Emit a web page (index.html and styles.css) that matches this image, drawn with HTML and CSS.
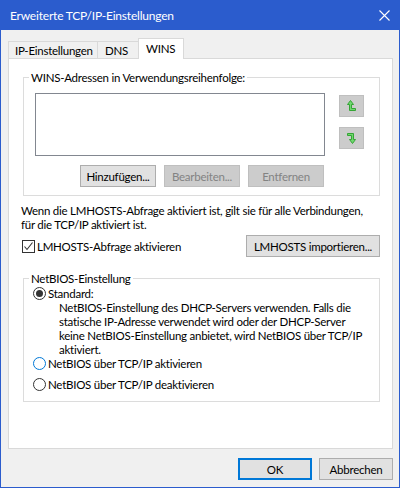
FILE: index.html
```html
<!DOCTYPE html>
<html lang="de">

<head>
    <meta charset="UTF-8">
    <title>Erweiterte TCP/IP-Einstellungen</title>
    <link rel="stylesheet" href="styles.css">
</head>

<body>
    <div class="window">
        <div class="titlebar">
            <span class="title">Erweiterte TCP/IP-Einstellungen</span>
            <svg class="close" width="11" height="11" viewBox="0 0 11 11">
                <path d="M0.5 0.5 L10.5 10.5 M10.5 0.5 L0.5 10.5" stroke="#fff" stroke-width="1.1" fill="none" />
            </svg>
        </div>

        <div class="content">
            <div class="tabs">
                <div class="tab tab-ip">IP-Einstellungen</div>
                <div class="tab tab-dns">DNS</div>
                <div class="tab tab-wins active">WINS</div>
            </div>

            <div class="panel">
                <!-- WINS addresses -->
                <fieldset class="group wins">
                    <legend>WINS-Adressen in Verwendungsreihenfolge:</legend>
                    <div class="wins-grid">
                        <div class="listbox"></div>
                        <div class="arrows">
                            <div class="arrow">
                                <svg width="9" height="12" viewBox="0 0 9 12">
                                    <path d="M3.5 0.5 L6.5 4.5 L4.5 4.5 L4.5 8.5 L8.5 8.5 L8.5 10.5 L2.5 10.5 L2.5 4.5 L0.5 4.5 Z" fill="#6fd86f" stroke="#35a535" stroke-width="1" />
                                </svg>
                            </div>
                            <div class="arrow">
                                <svg width="9" height="12" viewBox="0 0 9 12">
                                    <path d="M5.5 11.5 L2.5 7.5 L4.5 7.5 L4.5 3.5 L0.5 3.5 L0.5 1.5 L6.5 1.5 L6.5 7.5 L8.5 7.5 Z" fill="#6fd86f" stroke="#35a535" stroke-width="1" />
                                </svg>
                            </div>
                        </div>
                        <div class="list-buttons">
                            <button class="btn">Hinzufügen...</button>
                            <button class="btn" disabled>Bearbeiten...</button>
                            <button class="btn" disabled>Entfernen</button>
                        </div>
                    </div>
                </fieldset>

                <p class="note">Wenn die LMHOSTS-Abfrage aktiviert ist, gilt sie für alle Verbindungen,<br>für die TCP/IP aktiviert ist.</p>

                <div class="lmhosts-row">
                    <label class="check">
                        <span class="box">
                            <svg width="11" height="11" viewBox="0 0 11 11">
                                <path d="M1.5 5.5 L4 8.5 L9.5 1.5" stroke="#333" stroke-width="1.1" fill="none" />
                            </svg>
                        </span>
                        LMHOSTS-Abfrage aktivieren
                    </label>
                    <button class="btn import">LMHOSTS importieren...</button>
                </div>

                <!-- NetBIOS -->
                <fieldset class="group netbios">
                    <legend>NetBIOS-Einstellung</legend>
                    <div class="radio"><span class="dot checked"></span>Standard:</div>
                    <p class="desc">NetBIOS-Einstellung des DHCP-Servers verwenden. Falls die<br>statische IP-Adresse verwendet wird oder der DHCP-Server<br>keine NetBIOS-Einstellung anbietet, wird NetBIOS über TCP/IP<br>aktiviert.</p>
                    <div class="radio"><span class="dot hover"></span>NetBIOS über TCP/IP aktivieren</div>
                    <div class="radio last"><span class="dot"></span>NetBIOS über TCP/IP deaktivieren</div>
                </fieldset>
            </div>

            <div class="footer">
                <button class="btn default">OK</button>
                <button class="btn">Abbrechen</button>
            </div>
        </div>
    </div>
</body>

</html>
```

FILE: styles.css
```css
/* Basic Style */
* {
    box-sizing: border-box;
}

body {
    margin: 0;
    background: #fff;
    color: #000;
    font-family: Lato, sans-serif;
    font-size: 11.5px;
    letter-spacing: -0.25px;
    white-space: nowrap;
}

.window {
    width: 400px;
    height: 488px;
    border: 1px solid #2b5ccd;
    background: #f0f0f0;
}

/* Title bar */
.titlebar {
    height: 29px;
    background: #2b5ccd;
    color: #fff;
    display: flex;
    align-items: center;
    justify-content: space-between;
    padding: 0 9px 0 9px;
}

.title {
    font-size: 12px;
    letter-spacing: -0.2px;
}

.close {
    display: block;
}

.content {
    padding: 8px 6px 0 7px;
}

/* Tabs */
.tabs {
    display: flex;
    align-items: flex-end;
    height: 20px;
}

.tab {
    height: 17px;
    border: 1px solid #d9d9d9;
    border-bottom: 0;
    background: #f0f0f0;
    display: flex;
    align-items: center;
    line-height: 15px;
}

.tab-ip {
    width: 90px;
    padding-left: 6px;
}

.tab-dns {
    width: 42px;
    margin-left: -1px;
    padding-left: 7px;
}

.tab-wins {
    width: 46px;
    margin-left: -1px;
    padding-left: 7px;
}

.tab.active {
    height: 21px;
    margin-bottom: -1px;
    background: #fff;
    position: relative;
    z-index: 1;
    padding-bottom: 2px;
}

/* Panel */
.panel {
    height: 391px;
    background: #fff;
    border: 1px solid #d9d9d9;
    padding: 11px 12px 0 14px;
}

.group {
    margin: 0;
    padding: 0;
    border: 1px solid #dcdcdc;
    min-width: 0;
}

.group legend {
    margin-left: 5px;
    padding: 0 2px;
    line-height: 15px;
}

/* WINS */
.wins {
    padding: 8px 0 8px 0;
}

.wins-grid {
    display: grid;
    grid-template-columns: 290px 25px;
    column-gap: 14px;
    row-gap: 9px;
    margin-left: 11px;
}

.listbox {
    height: 63px;
    border: 1px solid #828790;
    background: #fff;
}

.arrows {
    display: flex;
    flex-direction: column;
    gap: 10px;
    padding-top: 2px;
}

.arrow {
    width: 25px;
    height: 22px;
    background: #cccccc;
    border: 1px solid #bfbfbf;
    display: flex;
    align-items: center;
    justify-content: center;
}

.arrow svg {
    display: block;
}

.list-buttons {
    display: flex;
    justify-content: flex-end;
    gap: 8px;
    padding-right: 1px;
}

/* Buttons */
.btn {
    height: 22px;
    width: 76px;
    padding: 0;
    margin: 0;
    font-family: Lato, sans-serif;
    font-size: 11.5px;
    letter-spacing: -0.25px;
    color: #000;
    background: #e1e1e1;
    border: 1px solid #adadad;
    white-space: nowrap;
}

.btn:disabled {
    background: #cccccc;
    border-color: #bfbfbf;
    color: #838383;
}

.btn.default {
    border: 2px solid #0078d7;
}

/* LMHOSTS */
.note {
    margin: 8px 0 0 -2px;
    line-height: 14px;
}

.lmhosts-row {
    display: flex;
    align-items: center;
    justify-content: space-between;
    margin-top: 3px;
}

.check {
    display: flex;
    align-items: center;
    gap: 2px;
    margin-left: -1px;
}

.box {
    width: 13px;
    height: 13px;
    border: 1px solid #333;
    background: #fff;
    display: flex;
    align-items: center;
    justify-content: center;
}

.box svg {
    display: block;
}

.import {
    width: 134px;
}

/* NetBIOS */
.netbios {
    margin-top: 14px;
    padding: 0 0 9px 0;
}

.radio {
    display: flex;
    align-items: center;
    gap: 2px;
    line-height: 15px;
    height: 15px;
    margin-left: 9px;
}

.radio.last {
    margin-top: 6px;
}

.dot {
    width: 13px;
    height: 13px;
    border: 1px solid #333;
    border-radius: 50%;
    background: #fff;
    display: flex;
    align-items: center;
    justify-content: center;
}

.dot.checked::after {
    content: "";
    width: 7px;
    height: 7px;
    border-radius: 50%;
    background: #333;
}

.dot.hover {
    border-color: #0078d7;
}

.desc {
    margin: 0 0 -1px 35px;
    line-height: 14px;
}

/* Footer */
.footer {
    display: flex;
    justify-content: flex-end;
    gap: 7px;
    margin-top: 9px;
    padding-right: 0;
}

.footer .btn {
    width: 74px;
}
```
